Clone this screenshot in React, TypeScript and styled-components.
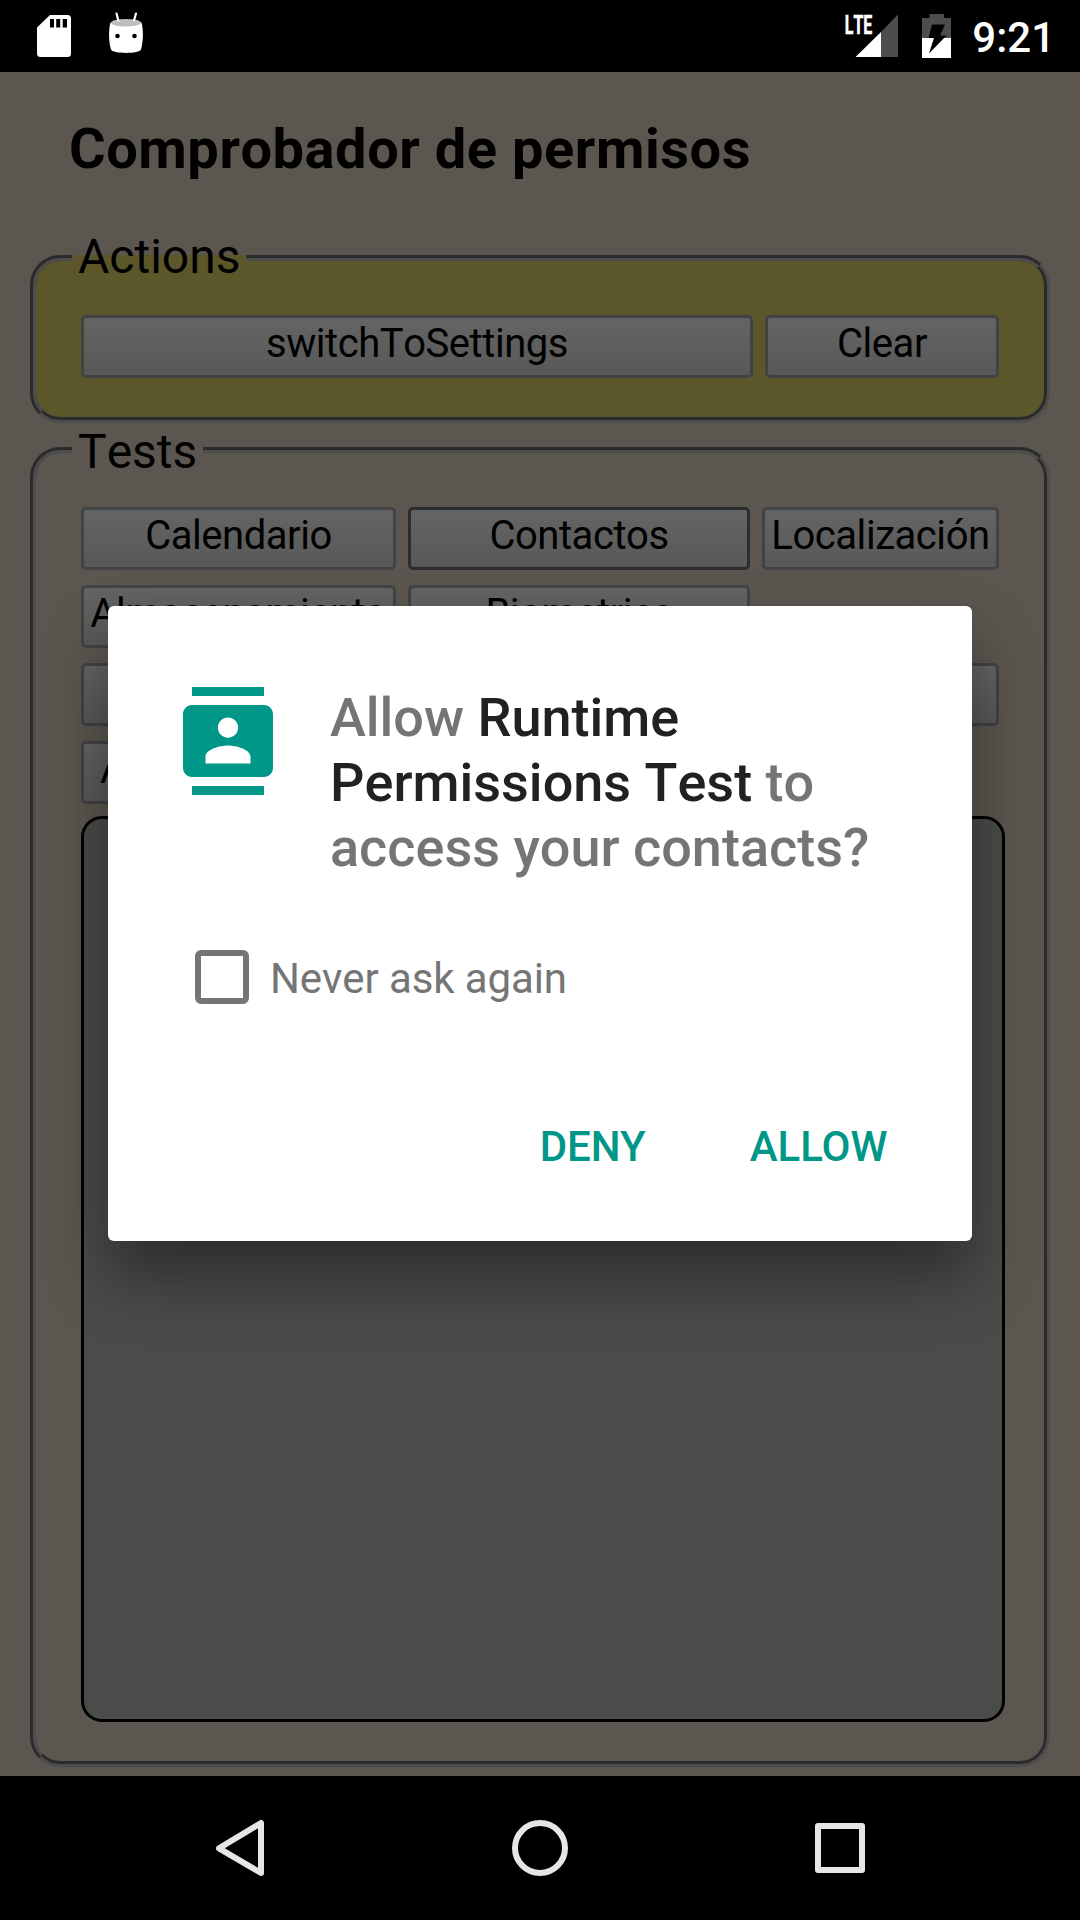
import React from "react";
import styled, { createGlobalStyle } from "styled-components";

const Global = createGlobalStyle`
  * { box-sizing: border-box; }
  body { margin: 0; background: #000; font-family: Roboto, "Noto Sans", sans-serif; font-kerning: none; }
`;

const Phone = styled.div`
  width: 1080px;
  height: 1920px;
  display: flex;
  flex-direction: column;
  overflow: hidden;
  background: #000;
`;

const StatusBar = styled.header`
  height: 72px;
  flex: none;
  display: flex;
  align-items: center;
  justify-content: space-between;
  padding: 0 25px 0 30px;
  color: #fff;
`;

const StatusGroup = styled.div<{ $gap: number }>`
  display: flex;
  align-items: center;
  gap: ${(p) => p.$gap}px;
`;

const Clock = styled.span`
  font-size: 42px;
  line-height: 48px;
  font-weight: 500;
  padding-top: 3px;
`;

const Page = styled.main`
  position: relative;
  flex: 1;
  padding: 0 30px 9px;
  display: flex;
  flex-direction: column;
  background: #e4d7c5;
`;

const Title = styled.h1`
  height: 159px;
  flex: none;
  margin: 0;
  padding: 44px 0 0 39px;
  font-size: 56px;
  line-height: 66px;
  font-weight: 700;
  letter-spacing: 0.53px;
  color: #000;
`;

const Group = styled.fieldset<{ $fill?: string; $grow?: boolean }>`
  margin: 0;
  min-width: 0;
  padding: 30px 45px 39px;
  border: 6px groove #c0c0c0;
  border-radius: 30px;
  background: ${(p) => p.$fill ?? "transparent"};
  flex: ${(p) => (p.$grow ? "1" : "none")};
`;

const Legend = styled.legend`
  margin-left: -9px;
  padding: 0 6px;
  font-size: 48px;
  line-height: 54px;
  color: #000;
`;

const LegendText = styled.span<{ $shift: number }>`
  display: block;
  transform: translateY(${(p) => p.$shift}px);
`;

const Row = styled.div<{ $columns: string }>`
  display: grid;
  grid-template-columns: ${(p) => p.$columns};
  column-gap: 12px;
`;

const Rows = styled.div`
  display: flex;
  flex-direction: column;
  gap: 15px;
`;

const PageButton = styled.button<{ $focused?: boolean; $start?: boolean }>`
  height: 63px;
  min-width: 0;
  padding: ${(p) => (p.$start ? "0 0 7px 16px" : "0 0 7px")};
  border: 3px solid ${(p) => (p.$focused ? "#6f7173" : "#a5a8aa")};
  border-radius: 5px;
  background: linear-gradient(#fafafa, #dddddd);
  font: 400 40px/47px Roboto, sans-serif;
  font-kerning: none;
  letter-spacing: -0.45px;
  text-align: ${(p) => (p.$start ? "left" : "center")};
  white-space: nowrap;
  color: #000;
`;

const Output = styled.div`
  width: 924px;
  height: 906px;
  margin-top: 12px;
  border: 3px solid #000;
  border-radius: 21px;
  background: #b9bfb6;
`;

const Scrim = styled.div`
  position: absolute;
  inset: 0;
  display: flex;
  align-items: center;
  justify-content: center;
  background: rgba(0, 0, 0, 0.6);
`;

const Dialog = styled.section`
  width: 864px;
  height: 635px;
  margin-bottom: 1px;
  padding: 78px 72px 0;
  border-radius: 6px;
  background: #fff;
  box-shadow: 0 36px 64px rgba(0, 0, 0, 0.4);
`;

const Prompt = styled.div`
  display: flex;
  align-items: flex-start;
  gap: 48px;
`;

const PromptIcon = styled.svg`
  flex: none;
  width: 108px;
  height: 108px;
  margin: 3px 0 0 -6px;
  fill: #009688;
`;

const Question = styled.p`
  margin: 0;
  padding-top: 1px;
  width: 560px;
  font-size: 54px;
  line-height: 65px;
  font-weight: 500;
  color: #757575;
`;

const AppName = styled.span`
  color: #212121;
`;

const CheckLabel = styled.label`
  display: flex;
  align-items: center;
  gap: 21px;
  height: 54px;
  margin: 70px 0 0 15px;
  font-size: 42px;
  line-height: 50px;
  letter-spacing: -0.1px;
  color: #757575;
`;

const CheckText = styled.span`
  padding-top: 3px;
`;

const CheckBox = styled.span`
  width: 54px;
  height: 54px;
  border: 6px solid #757575;
  border-radius: 6px;
`;

const Actions = styled.div`
  display: flex;
  justify-content: flex-end;
  gap: 104px;
  margin-top: 118px;
  padding-right: 12.500px;
`;

const DialogButton = styled.button`
  padding: 0;
  border: 0;
  background: none;
  font: 500 42px/50px Roboto, sans-serif;
  color: #009688;
`;

const NavBar = styled.nav`
  height: 144px;
  flex: none;
  display: flex;
  align-items: center;
  justify-content: center;
  gap: 240px;
`;

const NavIcon = styled.svg`
  width: 60px;
  height: 60px;
  fill: none;
  stroke: #e6e6e6;
  stroke-width: 6;
  stroke-linejoin: round;
`;

export default function App() {
  return (
    <Phone>
      <Global />
      <StatusBar>
        <StatusGroup $gap={24}>
          <svg width="48" height="72" viewBox="30 0 48 72">
            <path
              fill="#fff"
              fillRule="evenodd"
              d="M50 15H67.500Q71 15 71 18.500V53.500Q71 57 67.500 57H40.500Q37 57 37 53.500V27.500ZM50 19V27.500H54V19ZM56.200 19V27.500H60.200V19ZM62.700 19V27.500H67V19Z"
            />
          </svg>
          <svg width="48" height="72" viewBox="102 0 48 72">
            <path
              fill="#fff"
              d="M110.500 22.500C108.500 29 108.500 41 111 49.500C112 54 140 54 141 49.500C143.500 41 143.500 29 141.500 22.500Z"
            />
            <ellipse cx="126" cy="22.700" rx="15" ry="3.800" fill="#bdbdbd" />
            <path d="M116.500 13.500L118.300 20.500M136 13.500L134 20.500" stroke="#fff" strokeWidth="2.200" strokeLinecap="round" />
            <circle cx="117.500" cy="36" r="2.300" />
            <circle cx="134.500" cy="36" r="2.300" />
          </svg>
        </StatusGroup>
        <StatusGroup $gap={19}>
          <svg width="60" height="72" viewBox="842 0 60 72">
            <path fill="#4d4d4d" d="M898 14.500V57H881V32Z" />
            <path fill="#fff" d="M881 32V57H855.500Z" />
            <text
              x="844.800"
              y="33.500"
              fill="#fff"
              stroke="#fff"
              strokeWidth="0.6"
              fontFamily="Roboto, sans-serif"
              fontWeight="700"
              fontSize="26"
              textLength="27.500"
              lengthAdjust="spacingAndGlyphs"
            >
              LTE
            </text>
          </svg>
          <svg width="32" height="72" viewBox="922 0 32 72">
            <path fill="#4d4d4d" d="M930.500 14H945V18H952V38H923V18H930.500Z" />
            <path fill="#fff" d="M923 38H952V58H923Z" />
            <path d="M933 24.500H946L941 35.500H947.500L930 53.500L935 38H929.500Z" />
          </svg>
          <Clock>9:21</Clock>
        </StatusGroup>
      </StatusBar>

      <Page>
        <Title>Comprobador de permisos</Title>
        <Group $fill="#e6d66b">
          <Legend>
            <LegendText $shift={-1}>Actions</LegendText>
          </Legend>
          <Row $columns="672px 234px">
            <PageButton>switchToSettings</PageButton>
            <PageButton>Clear</PageButton>
          </Row>
        </Group>
        <Group $grow>
          <Legend>
            <LegendText $shift={2}>Tests</LegendText>
          </Legend>
          <Rows>
            <Row $columns="315px 342px 237px">
              <PageButton>Calendario</PageButton>
              <PageButton $focused>Contactos</PageButton>
              <PageButton>Localización</PageButton>
            </Row>
            <Row $columns="315px 342px">
              <PageButton>Almacenamiento</PageButton>
              <PageButton>Biometrics</PageButton>
            </Row>
            <Row $columns="315px 1fr">
              <PageButton />
              <PageButton />
            </Row>
            <Row $columns="315px">
              <PageButton $start>A</PageButton>
            </Row>
          </Rows>
          <Output />
        </Group>

        <Scrim>
          <Dialog>
            <Prompt>
              <PromptIcon viewBox="0 0 24 24">
                <path d="M20 0H4v2h16V0zM4 24h16v-2H4v2zM20 4H4c-1.100 0-2 .9-2 2v12c0 1.100.9 2 2 2h16c1.100 0 2-.9 2-2V6c0-1.100-.9-2-2-2zm-8 2.750c1.240 0 2.250 1.010 2.250 2.250s-1.010 2.250-2.250 2.250S9.750 10.240 9.750 9 10.760 6.750 12 6.750zM17 17H7v-1.500c0-1.670 3.330-2.500 5-2.500s5 .83 5 2.500V17z" />
              </PromptIcon>
              <Question>
                Allow <AppName>Runtime Permissions Test</AppName> to access your contacts?
              </Question>
            </Prompt>
            <CheckLabel>
              <CheckBox />
              <CheckText>Never ask again</CheckText>
            </CheckLabel>
            <Actions>
              <DialogButton>DENY</DialogButton>
              <DialogButton>ALLOW</DialogButton>
            </Actions>
          </Dialog>
        </Scrim>
      </Page>

      <NavBar>
        <NavIcon viewBox="210 1818 60 60">
          <path d="M261 1823V1873L219 1848.300Z" />
        </NavIcon>
        <NavIcon viewBox="510 1818 60 60">
          <circle cx="540" cy="1848" r="25" />
        </NavIcon>
        <NavIcon viewBox="810 1818 60 60">
          <rect x="818" y="1826" width="44" height="44" />
        </NavIcon>
      </NavBar>
    </Phone>
  );
}
